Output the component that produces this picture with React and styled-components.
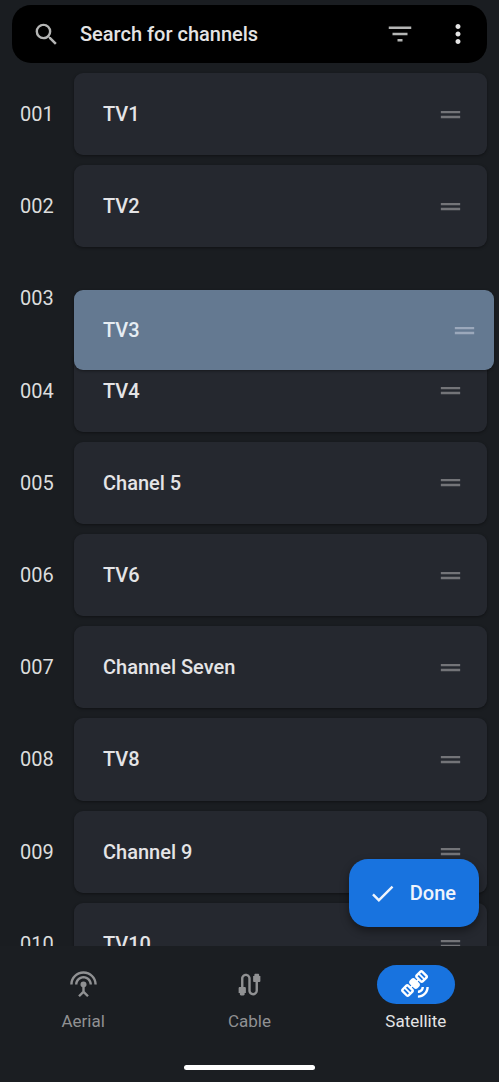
import React from "react";
import styled, { createGlobalStyle, css } from "styled-components";
import {
  MdCable,
  MdCheck,
  MdDragHandle,
  MdFilterList,
  MdMoreVert,
  MdSatelliteAlt,
  MdSearch,
  MdSettingsInputAntenna,
} from "react-icons/md";

const GlobalStyle = createGlobalStyle`
  *, *::before, *::after { box-sizing: border-box; }
  body {
    margin: 0;
    background: #1a1d21;
    color: #e4e4e6;
    font-family: Roboto, "Liberation Sans", sans-serif;
  }
  button, input { font: inherit; color: inherit; }
`;

const Screen = styled.div`
  display: flex;
  flex-direction: column;
  height: 100vh;
  overflow: hidden;
`;

const Header = styled.header`
  flex: none;
  padding: 5px 12px 0;
`;

const SearchBar = styled.form`
  display: flex;
  align-items: center;
  height: 58px;
  padding: 0 14px 0 20px;
  gap: 19px;
  border-radius: 19px;
  background: #000;
`;

const SearchLabel = styled.label`
  display: flex;
  flex: none;
  color: #b4b5b4;
  font-size: 29px;
`;

const SearchInput = styled.input`
  flex: 1;
  min-width: 0;
  padding: 0;
  border: 0;
  outline: 0;
  background: transparent;
  font-size: 20px;
  font-weight: 500;
  line-height: 28px;

  &::placeholder {
    color: #e4e4e4;
    opacity: 1;
  }
`;

const Actions = styled.div`
  display: flex;
  gap: 28px;
`;

const IconButton = styled.button`
  display: flex;
  flex: none;
  padding: 0;
  border: 0;
  background: transparent;
  color: ${(p) => p.$color};
  font-size: ${(p) => p.$size}px;
  cursor: pointer;
`;

const Content = styled.main`
  position: relative;
  flex: 1;
  min-height: 0;
`;

const Scroller = styled.div`
  height: 100%;
  padding: 10px 12px 0 20px;
  overflow: auto;
  scrollbar-width: none;
`;

const ChannelList = styled.ol`
  display: grid;
  grid-auto-rows: 1fr;
  gap: 10px;
  min-height: 912px;
  margin: 0;
  padding: 0;
  list-style: none;
`;

const Row = styled.li`
  display: grid;
  grid-template-columns: 54px 1fr;
  align-items: center;
`;

const ChannelNumber = styled.span`
  color: #dcdddd;
  font-size: 20px;
  line-height: 24px;
`;

const Slot = styled.div`
  position: relative;
  height: 100%;
`;

const Card = styled.div`
  display: flex;
  align-items: center;
  justify-content: space-between;
  height: 100%;
  padding: 0 22px 0 29px;
  border-radius: 9px;
  background: #25282f;
  box-shadow: 0 1px 3px rgba(0, 0, 0, 0.4);

  ${(p) =>
    p.$dragging &&
    css`
      position: absolute;
      top: 33px;
      left: 0;
      right: -7px;
      z-index: 1;
      height: 80px;
      padding-right: 15px;
      border-radius: 9px;
      background: #647991;
    `}
`;

const ChannelName = styled.span`
  color: ${(p) => (p.$dragging ? "#e6edf3" : "#e4e4e6")};
  font-size: 20px;
  font-weight: 500;
  line-height: 24px;
`;

const DoneButton = styled.button`
  position: absolute;
  right: 20px;
  bottom: 19px;
  z-index: 2;
  display: flex;
  align-items: center;
  gap: 13px;
  height: 68px;
  padding: 0 23px 0 19px;
  border: 0;
  border-radius: 19px;
  background: #1873df;
  box-shadow: 0 4px 9px rgba(0, 0, 0, 0.4);
  color: #eef4fc;
  font-size: 20px;
  font-weight: 500;
  cursor: pointer;

  svg {
    font-size: 29px;
  }
`;

const Footer = styled.footer`
  flex: none;
  background: #1b1e22;
`;

const Tabs = styled.nav`
  display: grid;
  grid-template-columns: repeat(3, 1fr);
  padding-top: 19px;
`;

const Tab = styled.a`
  display: flex;
  flex-direction: column;
  align-items: center;
  gap: 7px;
  color: ${(p) => (p.$active ? "#e4e4e6" : "#909193")};
  font-size: 17px;
  line-height: 20px;
  text-decoration: none;
`;

const TabIcon = styled.span`
  display: flex;
  align-items: center;
  justify-content: center;
  width: 78px;
  height: 39px;
  border-radius: 20px;
  background: ${(p) => (p.$active ? "#1873df" : "transparent")};
  color: ${(p) => (p.$active ? "#fff" : "#909193")};
  font-size: 29px;
`;

const HomeIndicator = styled.div`
  width: 131px;
  height: 5px;
  margin: 34px auto 12px;
  border-radius: 3px;
  background: #fff;
`;

const channels = [
  "TV1",
  "TV2",
  "TV3",
  "TV4",
  "Chanel 5",
  "TV6",
  "Channel Seven",
  "TV8",
  "Channel 9",
  "TV10",
];

const tabs = [
  { id: "aerial", label: "Aerial", Icon: MdSettingsInputAntenna },
  { id: "cable", label: "Cable", Icon: MdCable },
  { id: "satellite", label: "Satellite", Icon: MdSatelliteAlt },
];

function ChannelRow({ number, name, dragging }) {
  return (
    <Row>
      <ChannelNumber>{String(number).padStart(3, "0")}</ChannelNumber>
      <Slot>
        <Card $dragging={dragging}>
          <ChannelName $dragging={dragging}>{name}</ChannelName>
          <IconButton
            type="button"
            aria-label={`Move ${name}`}
            $size={29}
            $color={dragging ? "#9ba8bb" : "#737478"}
          >
            <MdDragHandle />
          </IconButton>
        </Card>
      </Slot>
    </Row>
  );
}

export default function App() {
  const draggedName = "TV3";
  const activeTab = "satellite";

  return (
    <>
      <GlobalStyle />
      <Screen>
        <Header>
          <SearchBar role="search" onSubmit={(e) => e.preventDefault()}>
            <SearchLabel htmlFor="channel-search" aria-label="Search">
              <MdSearch />
            </SearchLabel>
            <SearchInput
              id="channel-search"
              type="text"
              placeholder="Search for channels"
            />
            <Actions>
              <IconButton type="button" aria-label="Filter" $size={30} $color="#b4b5b4">
                <MdFilterList />
              </IconButton>
              <IconButton type="button" aria-label="More options" $size={30} $color="#e4e4e4">
                <MdMoreVert />
              </IconButton>
            </Actions>
          </SearchBar>
        </Header>

        <Content>
          <Scroller>
            <ChannelList>
              {channels.map((name, i) => (
                <ChannelRow
                  key={name}
                  number={i + 1}
                  name={name}
                  dragging={name === draggedName}
                />
              ))}
            </ChannelList>
          </Scroller>
          <DoneButton type="button">
            <MdCheck />
            Done
          </DoneButton>
        </Content>

        <Footer>
          <Tabs>
            {tabs.map(({ id, label, Icon }) => (
              <Tab
                key={id}
                href={`#${id}`}
                $active={id === activeTab}
                aria-current={id === activeTab ? "page" : undefined}
              >
                <TabIcon $active={id === activeTab}>
                  <Icon />
                </TabIcon>
                {label}
              </Tab>
            ))}
          </Tabs>
          <HomeIndicator />
        </Footer>
      </Screen>
    </>
  );
}
